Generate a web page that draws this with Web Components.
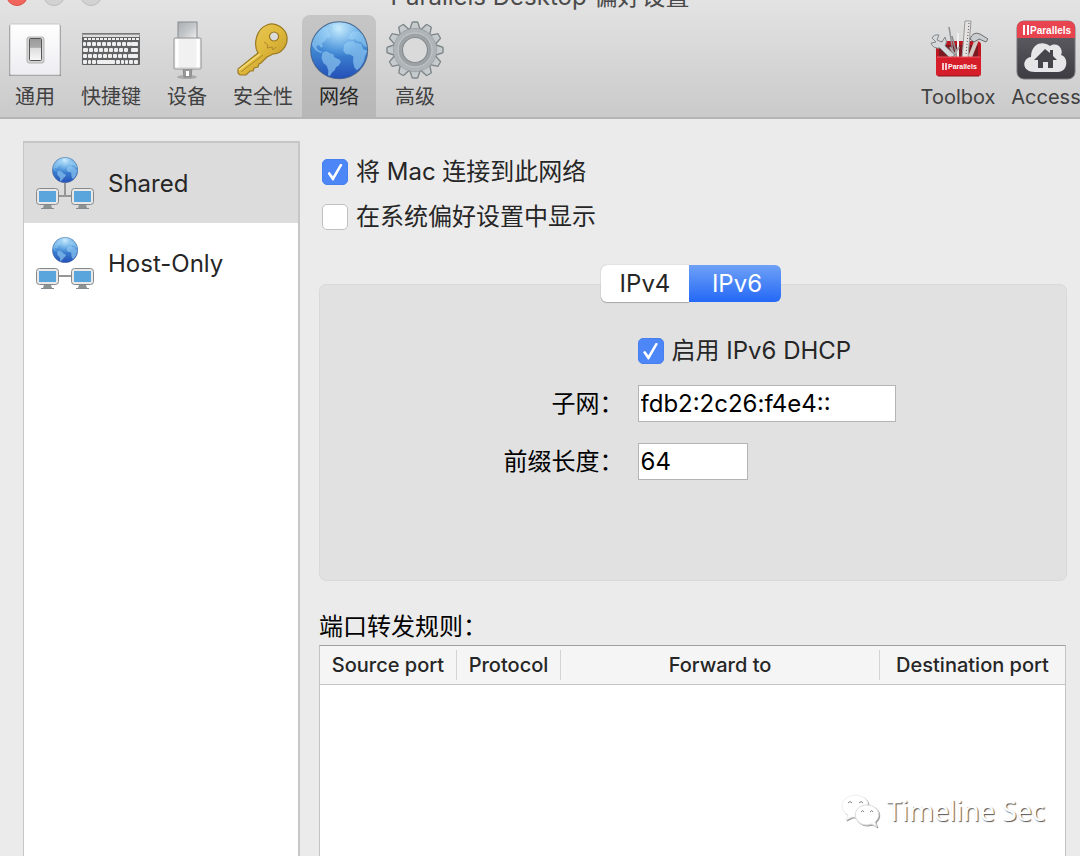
<!DOCTYPE html>
<html lang="zh-CN">
<head>
<meta charset="utf-8">
<title>Parallels Desktop 偏好设置</title>
<style>
    body {
        margin: 0;
        background: #ebebeb;
        color: #262626;
        font-family: Inter, "Noto Sans CJK SC", sans-serif;
        font-size: 24px;
    }
</style>
</head>
<body>
<preferences-window></preferences-window>

<script>
const globe = `
    <defs>
        <linearGradient id="sea" x2="0" y2="1"><stop offset="0" stop-color="#75b3e5"/><stop offset=".5" stop-color="#3f87d3"/><stop offset="1" stop-color="#2450b8"/></linearGradient>
        <radialGradient id="shine" cx=".5" cy=".12" r=".5"><stop offset="0" stop-color="#d3f2ff" stop-opacity=".9"/><stop offset="1" stop-color="#8fd0ff" stop-opacity="0"/></radialGradient>
        <clipPath id="ball"><circle cx="86" cy="86" r="83"/></clipPath>
    </defs>
    <circle cx="86" cy="86" r="84" fill="url(#sea)"/>
    <g clip-path="url(#ball)">
        <g fill="#8bc3ee" opacity=".7">
            <path d="M5 66 12 48 26 30 42 18 55 20 53 31 61 40 57 49 48 51 44 60 35 65 38 75 32 78 26 70 18 76 24 86 36 91 31 94 17 87 9 76Z"/>
            <path d="M37 92 48 89 59 95 69 99 72 107 88 114 91 121 84 132 77 136 72 146 65 152 59 162 53 160 54 145 49 132 39 123 34 109Z"/>
            <path d="M101 69 113 61 129 60 134 65 151 67 157 83 170 88 162 103 159 119 148 137 138 145 131 137 127 121 128 105 118 99 106 98 98 88Z"/>
            <path d="M106 53 115 47 119 36 131 30 144 32 158 40 169 59 169 78 158 72 151 63 139 60 133 53 124 56 115 51Z"/>
            <path d="M66 12 81 7 90 13 80 24 72 29Z"/>
        </g>
        <circle cx="86" cy="86" r="83" fill="url(#shine)"/>
    </g>
    <circle cx="86" cy="86" r="84" fill="none" stroke="#38577f" stroke-width="3" opacity=".8"/>`;

function keyboardKeys() {
    let keys = "";
    for (let x = 3; x < 56; x += 4) {
        keys += `<rect x="${x}" y="15" width="3" height="2"/>`;
    }
    [[19, 2], [25, 4], [31, 3]].forEach(([y, start]) => {
        keys += `<rect x="2" y="${y}" width="${start + 1}" height="4" rx="1"/>`;
        for (let x = start + 4; x < 48; x += 5) {
            keys += `<rect x="${x}" y="${y}" width="4" height="4" rx="1"/>`;
        }
        keys += `<rect x="50" y="${y}" width="7" height="4" rx="1"/>`;
    });
    [[2, 4], [7, 3], [11, 4], [16, 18], [35, 4], [40, 3], [44, 3], [48, 4], [53, 4]].forEach(([x, w]) => {
        keys += `<rect x="${x}" y="37" width="${w}" height="4" rx="1"/>`;
    });
    return keys;
}

function gearTeeth() {
    let teeth = "";
    for (let i = 0; i < 12; i++) {
        teeth += `<path d="M23 11 26 2Q26 1 27 1H31Q32 1 32 2L35 11Z" transform="rotate(${i * 30} 29 29)"/>`;
    }
    return teeth;
}

const icons = {
    general: `<svg viewBox="0 0 60 60" width="60" height="60">
        <defs><linearGradient id="g" x2="0" y2="1"><stop stop-color="#999"/><stop offset=".4" stop-color="#aaa"/><stop offset=".45" stop-color="#ddd"/><stop offset="1" stop-color="#f8f8f8"/></linearGradient>
        <linearGradient id="p" x2="0" y2="1"><stop stop-color="#fff"/><stop offset="1" stop-color="#ededf2"/></linearGradient></defs>
        <rect x="4" y="5" width="52" height="51" rx="1" fill="#888"/>
        <rect x="5" y="4" width="50" height="51" rx="1" fill="url(#p)" stroke="#c9c9cb"/>
        <rect x="22" y="17" width="17" height="26" rx="2" fill="#d4d4d4" stroke="#b4b4b4"/>
        <rect x="24.5" y="18.500" width="12" height="22" rx="1" fill="url(#g)" stroke="#555"/></svg>`,
    keyboard: `<svg viewBox="0 0 60 60" width="60" height="60">
        <rect x="1" y="13" width="58" height="32" rx="1" fill="#606264"/>
        <path d="M1 13H59V17H1Z" fill="#999b9d"/><path d="M1 13.500H59" stroke="#777"/>
        <path d="M2 16H58" stroke="#ddd" stroke-width="2"/><g fill="#efefef" transform="translate(0 3)">${keyboardKeys()}</g></svg>`,
    device: `<svg viewBox="0 0 60 60" width="60" height="60">
        <defs><linearGradient id="u" x2="1" y2="1"><stop stop-color="#aaaeb2"/><stop offset=".5" stop-color="#c5c8cb"/><stop offset="1" stop-color="#f4f4f4"/></linearGradient></defs>
        <ellipse cx="30" cy="57" rx="10" ry="2" fill="#aaa"/>
        <rect x="21" y="2" width="19" height="19" fill="url(#u)" stroke="#888b8e"/>
        <path d="M26 48H35L34 57H27Z" fill="#999" stroke="#888"/><path d="M29 51h3v5h-3z" fill="#fff"/>
        <rect x="17" y="18" width="27" height="31" rx="1" fill="#f1f1f2" stroke="#929292"/>
        <path d="M20 19V48M41 19V48" stroke="#fff" stroke-width="3"/><path d="M18 48H43" stroke="#ccc"/></svg>`,
    security: `<svg viewBox="0 0 60 60" width="60" height="60">
        <defs><linearGradient id="k" x2="1" y2="1"><stop stop-color="#ebce65"/><stop offset=".5" stop-color="#dfb93b"/><stop offset="1" stop-color="#b98e22"/></linearGradient></defs>
        <path fill-rule="evenodd" d="M25 33C20 25 23 9 34 5C43 1 53 9 54 17C55 26 48 34 40 34L34 37L28 43 26 44 25 47 21 48 20 51 17 51 13 55 7 55 5 53V49Z M41 12a4.500 4.500 0 1 0 .1 0Z" fill="url(#k)" stroke="#9a7923" stroke-width="1.2"/>
        <path d="M6 50 27 34" fill="none" stroke="#f4dc7c" stroke-width="1.5"/>
        <path d="M8 52 30 35M31 22l4 3-1 3 5-1 1 3 3-3" fill="none" stroke="#af892e"/></svg>`,
    network: `<svg viewBox="-3 -3 177 177" width="60" height="60">${globe}</svg>`,
    advanced: `<svg viewBox="-1 -1 60 60" width="60" height="60">
        <defs><linearGradient id="m" x1="0" y1="0" x2="0" y2="58" gradientUnits="userSpaceOnUse"><stop stop-color="#cbd0d3"/><stop offset=".5" stop-color="#a9adb2"/><stop offset="1" stop-color="#85898d"/></linearGradient></defs>
        <g fill="url(#m)" stroke="#7f878a" stroke-width="1.4">${gearTeeth()}<circle cx="29" cy="29" r="21"/></g>
        <circle cx="29" cy="29" r="21.500" fill="#afb4b8"/><circle cx="29" cy="29" r="15" fill="none" stroke="#9da2a6" stroke-width="4"/>
        <circle cx="29" cy="29" r="12.500" fill="#dadada" stroke="#858b8e" stroke-width="1.2"/><circle cx="29" cy="29" r="17" fill="none" stroke="#c7cccf"/></svg>`,
    toolbox: `<svg viewBox="0 0 60 60" width="60" height="60">
        <path d="M8 24Q9 21 12 21H49Q52 21 53 24V37H8Z" fill="#bd1722"/><path d="M11 25H50V37H11Z" fill="#7b1a20"/>
        <path d="M21 7 26 38M24 16 29 36" stroke="#8c9195" stroke-width="1.5"/><path d="M30 13V38" stroke="#eee" stroke-width="2"/><path d="M22 27 28 37M31 27 25 37" stroke="#aaa" stroke-width="2"/>
        <path d="M37 1 43 1 40 38H34Z" fill="#e6e2e2" stroke="#9a9a9a"/><path d="M41 3 38 35" stroke="#555" stroke-dasharray="1 2"/>
        <path d="M4 18Q6 14 11 15L9 20 14 22 17 17Q20 22 17 26L27 35 22 38 12 28Q5 29 3 23L8 22Z" fill="#d5d9db" stroke="#838789"/>
        <path d="M50 17 42 37" stroke="#d2c9c2" stroke-width="4"/><path d="M42 19Q45 11 52 14L60 19 58 22 51 19 46 22Z" fill="#c9cdd0" stroke="#6a6f72"/>
        <path d="M8 37H53V54Q53 56 51 56H10Q8 56 8 54Z" fill="#d51e29"/><path d="M9 37H52" stroke="#ef5860"/><path d="M10 56H51" stroke="#8b121a"/>
        <path d="M15 43V50M18 43V50" stroke="#fff" stroke-width="1.5"/><text x="20" y="49" font-size="7" font-weight="700" fill="#fff" font-family="Liberation Sans, sans-serif">Parallels</text></svg>`,
    access: `<svg viewBox="0 0 60 60" width="60" height="60">
        <defs><linearGradient id="a" x2="0" y2="1"><stop stop-color="#64646a"/><stop offset="1" stop-color="#3c3c42"/></linearGradient></defs>
        <rect x="1" y="1" width="58" height="58" rx="7" fill="url(#a)" stroke="#77777b"/>
        <path d="M1 18V8Q1 1 8 1H52Q59 1 59 8V18Z" fill="#e84450"/>
        <path d="M8 5V15M12 5V15" stroke="#fff" stroke-width="2"/><text x="14" y="14" font-size="10" font-weight="700" fill="#fff" font-family="Liberation Sans, sans-serif">Parallels</text>
        <path d="M19 52C5 52 6 38 15 37C15 24 26 20 34 26C42 21 48 30 45 35C53 37 52 52 42 52Z" fill="#e6e6e8"/>
        <path d="M29 29 34 33V30H37V36L41 40H37V48H32V42H27V48H22V40H18Z" fill="#45454b"/></svg>`
};

class ToolbarItem extends HTMLElement {
    connectedCallback() {
        this.attachShadow({mode: "open"});
        this.shadowRoot.innerHTML = `
        <style>
            :host { display: block; width: 74px; flex: none; }
            :host([wide]) { width: 86px; }
            button {
                display: flex;
                flex-direction: column;
                align-items: center;
                gap: 3px;
                box-sizing: border-box;
                width: 100%;
                height: 102px;
                padding: 5px 0 0;
                border: 0;
                border-radius: 8px 8px 0 0;
                background: none;
                color: #414141;
                font: inherit;
                font-size: 20px;
                line-height: 28px;
                white-space: nowrap;
            }
            :host([selected]) button { background: linear-gradient(#c6c6c6, #b7b7b7); color: #262626; }
            svg { display: block; flex: none; }
        </style>
        <button type="button">${icons[this.getAttribute("icon")]}<span><slot></slot></span></button>`;
    }
}
customElements.define("toolbar-item", ToolbarItem);

class WindowHeader extends HTMLElement {
    connectedCallback() {
        this.attachShadow({mode: "open"});
        this.shadowRoot.innerHTML = `
        <style>
            :host {
                display: block;
                overflow: hidden;
                background: linear-gradient(#e3e3e3, #cacaca);
                border-bottom: 2px solid #b5b5b5;
            }
            .title {
                display: grid;
                grid-template: 15px / 1fr auto 1fr;
                align-items: end;
                color: #4b4b4b;
                line-height: 30px;
            }
            .lights { display: flex; gap: 15px; padding: 0 0 9px 6px; }
            .lights i { width: 20px; height: 20px; border: 1px solid #bdbdbd; border-radius: 50%; background: #d2d2d2; }
            .lights i:first-child { background: #f0655c; border-color: #df5148; }
            h1 { margin: 0; padding-bottom: 3px; font: inherit; }
            nav { display: flex; gap: 2px; margin: 0 -9px 0 -2px; }
            .space { flex: 1; }
        </style>
        <div class="title"><div class="lights"><i></i><i></i><i></i></div><h1>Parallels Desktop 偏好设置</h1></div>
        <nav>
            <toolbar-item icon="general">通用</toolbar-item>
            <toolbar-item icon="keyboard">快捷键</toolbar-item>
            <toolbar-item icon="device">设备</toolbar-item>
            <toolbar-item icon="security">安全性</toolbar-item>
            <toolbar-item icon="network" selected>网络</toolbar-item>
            <toolbar-item icon="advanced">高级</toolbar-item>
            <span class="space"></span>
            <toolbar-item icon="toolbox" wide>Toolbox</toolbar-item>
            <toolbar-item icon="access" wide>Access</toolbar-item>
        </nav>`;
    }
}
customElements.define("window-header", WindowHeader);

class NetworkItem extends HTMLElement {
    connectedCallback() {
        const monitor = `
            <rect x="0.5" y="0.5" width="22" height="16" rx="3" fill="#e8e8e8" stroke="#85898c"/>
            <rect x="3" y="3" width="17" height="11" fill="#5aa6dc"/>
            <path d="M8 17H15L16 20H7Z" fill="#8c9194"/><path d="M5 20.5H18" stroke="#858a8e"/>`;
        const link = this.hasAttribute("selected") ? "M29 26V39M22 39H36" : "M22 39H36";
        this.attachShadow({mode: "open"});
        this.shadowRoot.innerHTML = `
        <style>
            :host { display: block; }
            button {
                display: flex;
                align-items: center;
                gap: 14px;
                width: 100%;
                height: 80px;
                padding: 0 12px;
                border: 0;
                background: none;
                color: inherit;
                font: inherit;
            }
            :host([selected]) button { background: #dcdcdc; }
        </style>
        <button type="button">
            <svg viewBox="0 0 58 52" width="58" height="52">
                <path d="${link}" fill="none" stroke="#969696" stroke-width="2"/>
                <svg x="16" y="0" width="26" height="26" viewBox="0 0 171 171">${globe}</svg>
                <g transform="translate(0 31)">${monitor}</g><g transform="translate(35 31)">${monitor}</g>
            </svg>
            <span><slot></slot></span>
        </button>`;
    }
}
customElements.define("network-item", NetworkItem);

class CheckOption extends HTMLElement {
    connectedCallback() {
        this.attachShadow({mode: "open"});
        this.shadowRoot.innerHTML = `
        <style>
            :host { display: block; }
            label { display: inline-flex; align-items: center; gap: 8px; line-height: 36px; }
            input {
                appearance: none;
                display: grid;
                place-items: center;
                box-sizing: border-box;
                width: 26px;
                height: 26px;
                margin: 0;
                border: 1px solid #c0c0c0;
                border-radius: 5px;
                background: #fff;
            }
            input:checked { background: #4c86f7; border-color: #4680ef; }
            input:checked::before {
                content: "";
                width: 15px;
                height: 17px;
                background: #fff;
                clip-path: polygon(0 58%, 13% 49%, 36% 75%, 86% 0, 100% 8%, 40% 100%, 33% 100%);
            }
        </style>
        <label><input type="checkbox" ${this.hasAttribute("checked") ? "checked" : ""}><span><slot></slot></span></label>`;
    }
}
customElements.define("check-option", CheckOption);

class TextField extends HTMLElement {
    connectedCallback() {
        this.attachShadow({mode: "open"});
        this.shadowRoot.innerHTML = `
        <style>
            :host {
                display: grid;
                grid-template-columns: minmax(0, 17fr) minmax(0, 24fr);
                column-gap: 14px;
                align-items: center;
                color: #000;
            }
            label { text-align: right; line-height: 36px; }
            input {
                box-sizing: border-box;
                display: block;
                width: 110px;
                height: 37px;
                padding: 0 2px;
                border: 1px solid #b4b4b4;
                border-radius: 0;
                background: #fff;
                color: #000;
                font: inherit;
            }
            :host([long]) input { width: 258px; }
        </style>
        <label for="field"><slot></slot></label>
        <div><input id="field" type="text" value="${this.getAttribute("value")}"></div>`;
    }
}
customElements.define("text-field", TextField);

class ProtocolPanel extends HTMLElement {
    connectedCallback() {
        this.attachShadow({mode: "open"});
        this.shadowRoot.innerHTML = `
        <style>
            :host { display: block; }
            .tabs { display: flex; justify-content: center; margin: 0 4px -18px 0; position: relative; }
            button {
                height: 37px;
                width: 92px;
                padding: 0;
                border: 0;
                background: #fff;
                color: #262626;
                font: inherit;
            }
            .tabs button:first-child { width: 88px; border-radius: 6px 0 0 6px; box-shadow: 0 0 1px #999, 0 1px 1px #aaa; }
            .tabs button:last-child { border-radius: 0 6px 6px 0; }
            button[aria-selected=true] { padding-left: 4px; background: linear-gradient(#6ea1f6, #2468f6); color: #fff; }
            section {
                display: flex;
                flex-direction: column;
                gap: 21px;
                box-sizing: border-box;
                min-height: 297px;
                padding: 48px 0 24px;
                border: 1px solid #d9d9d9;
                border-radius: 7px;
                background: #e1e1e1;
            }
            .dhcp {
                display: grid;
                grid-template-columns: minmax(0, 17fr) minmax(0, 24fr);
                column-gap: 14px;
                margin-bottom: -5px;
            }
            .dhcp check-option { grid-column: 2; }
        </style>
        <div class="tabs" role="tablist">
            <button type="button" role="tab" aria-selected="false">IPv4</button>
            <button type="button" role="tab" aria-selected="true">IPv6</button>
        </div>
        <section>
            <div class="dhcp"><check-option checked>启用 IPv6 DHCP</check-option></div>
            <text-field value="fdb2:2c26:f4e4::" long>子网：</text-field>
            <text-field value="64">前缀长度：</text-field>
        </section>`;
    }
}
customElements.define("protocol-panel", ProtocolPanel);

class ForwardingRules extends HTMLElement {
    connectedCallback() {
        this.attachShadow({mode: "open"});
        this.shadowRoot.innerHTML = `
        <style>
            :host { display: flex; flex-direction: column; }
            h2 { margin: 0; color: #000; font: inherit; line-height: 36px; }
            .list { flex: 1; background: #fff; border: 1px solid #c3c3c3; border-top-color: #a0a0a0; border-bottom: 0; margin-right: 1px; }
            table { width: 100%; border-collapse: collapse; table-layout: fixed; }
            thead { background: #f5f5f5; border-bottom: 1px solid #c6c6c6; }
            th { height: 38px; padding: 4px 0; box-sizing: border-box; font-size: 20px; font-weight: 500; line-height: 30px; white-space: nowrap; }
            th span { display: block; border-right: 1px solid #d4d4d4; }
            th:last-child span { border: 0; }
        </style>
        <h2 id="rules">端口转发规则：</h2>
        <div class="list">
            <table aria-labelledby="rules">
                <colgroup><col style="width: 137px"><col style="width: 104px"><col><col style="width: 185px"></colgroup>
                <thead><tr>
                    <th><span>Source port</span></th>
                    <th><span>Protocol</span></th>
                    <th><span>Forward to</span></th>
                    <th><span>Destination port</span></th>
                </tr></thead>
            </table>
        </div>`;
    }
}
customElements.define("forwarding-rules", ForwardingRules);

class ChannelMark extends HTMLElement {
    connectedCallback() {
        this.attachShadow({mode: "open"});
        this.shadowRoot.innerHTML = `
        <style>
            :host {
                display: flex;
                align-items: center;
                gap: 7px;
                color: #fff;
                font-family: "Noto Sans", sans-serif;
                font-size: 27px;
                line-height: 36px;
                text-shadow: 1px 1px 1px #555;
            }
            svg { filter: drop-shadow(1px 1px 0 #999); }
        </style>
        <svg viewBox="0 0 39 34" width="39" height="34">
            <path d="M27 10C25-2 3-2 1 11C1 16 3 19 7 21L5 26 11 23 16 23" fill="#fff" stroke="#eee"/>
            <path d="M26 11C10 11 11 31 26 31L31 30 36 33 34 28C42 21 36 11 26 11Z" fill="#fff" stroke="#ddd"/>
            <g fill="none" stroke="#888"><path d="M7 9q2-3 4 0M18 9q2-3 4 0M20 18q2-3 3 0M29 18q2-3 3 0"/></g>
        </svg>
        <span><slot></slot></span>`;
    }
}
customElements.define("channel-mark", ChannelMark);

class PreferencesWindow extends HTMLElement {
    connectedCallback() {
        this.attachShadow({mode: "open"});
        this.shadowRoot.innerHTML = `
        <style>
            :host { display: flex; flex-direction: column; min-height: 100vh; }
            main { flex: 1; display: flex; gap: 19px; padding: 22px 13px 0 23px; }
            aside { flex: none; width: 274px; border: 2px solid #c6c6c6; border-bottom: 0; border-left-width: 1px; background: #fff; }
            article { flex: 1; min-width: 0; display: flex; flex-direction: column; }
            .options { display: flex; flex-direction: column; gap: 9px; padding: 13px 3px 29px; }
            forwarding-rules { flex: 1; margin-top: 28px; }
            channel-mark { position: absolute; right: 35px; bottom: 27px; }
        </style>
        <window-header></window-header>
        <main>
            <aside>
                <network-item selected>Shared</network-item>
                <network-item>Host-Only</network-item>
            </aside>
            <article>
                <div class="options">
                    <check-option checked>将 Mac 连接到此网络</check-option>
                    <check-option>在系统偏好设置中显示</check-option>
                </div>
                <protocol-panel></protocol-panel>
                <forwarding-rules></forwarding-rules>
            </article>
        </main>
        <channel-mark>Timeline Sec</channel-mark>`;
    }
}
customElements.define("preferences-window", PreferencesWindow);
</script>
</body>
</html>
